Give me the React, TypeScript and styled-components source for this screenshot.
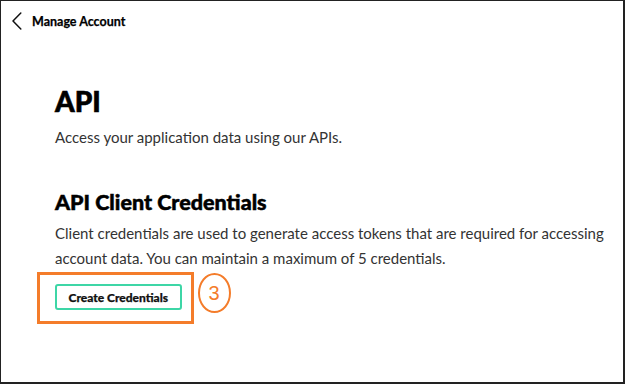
import React from 'react'
import styled, { createGlobalStyle } from 'styled-components'

const Global = createGlobalStyle`
  html, body {
    margin: 0;
    padding: 0;
    background: #ffffff;
  }
  * {
    box-sizing: border-box;
  }
`

const App = () => {
  return (
    <>
      <Global />
      <Frame>
        <Header>
          <BackButton aria-label="Back">
            <svg width="10" height="18" viewBox="0 0 10 18" fill="none">
              <path d="M8.8 1 L1 9 L8.8 17" stroke="#111" strokeWidth="1.5" strokeLinecap="round" strokeLinejoin="round" />
            </svg>
          </BackButton>
          <HeaderTitle>Manage Account</HeaderTitle>
        </Header>
        <Content>
          <PageTitle>API</PageTitle>
          <Text $gap={7}>Access your application data using our APIs.</Text>
          <SectionTitle>API Client Credentials</SectionTitle>
          <Text $gap={5}>
            Client credentials are used to generate access tokens that are required for accessing
            account data. You can maintain a maximum of 5 credentials.
          </Text>
          <ActionRow>
            <Highlight>
              <Button>Create Credentials</Button>
            </Highlight>
            <StepMarker>3</StepMarker>
          </ActionRow>
        </Content>
      </Frame>
    </>
  )
}

const Frame = styled.div`
  width: 625px;
  height: 384px;
  border-top: 1px solid #222;
  border-left: 1px solid #222;
  border-right: 2px solid #222;
  border-bottom: 2px solid #222;
  font-family: Lato, "Noto Sans", sans-serif;
  color: #111;
  overflow: hidden;
`

const Header = styled.div`
  display: flex;
  align-items: center;
  height: 40px;
  padding-left: 11px;
  gap: 10px;
`

const BackButton = styled.div`
  display: flex;
  align-items: center;
  width: 10px;
  height: 18px;
`

const HeaderTitle = styled.div`
  font-size: 12.5px;
  font-weight: 700;
  color: #000;
  -webkit-text-stroke: 0.25px #000;
`

const Content = styled.div`
  padding: 43px 0 0 54px;
`

const PageTitle = styled.h1`
  margin: 0;
  font-size: 28px;
  font-weight: 900;
  line-height: 34px;
  color: #000;
  -webkit-text-stroke: 0.6px #000;
`

const SectionTitle = styled.h2`
  margin: 38px 0 0;
  font-size: 21.5px;
  font-weight: 900;
  line-height: 28px;
  color: #000;
  -webkit-text-stroke: 0.5px #000;
`

const Text = styled.p<{ $gap: number }>`
  margin: ${(p) => p.$gap}px 0 0;
  font-size: 15px;
  line-height: 25px;
  color: #333;
`

const ActionRow = styled.div`
  display: flex;
  align-items: flex-start;
  margin: 1px 0 0 -18px;
  gap: 4px;
`

const Highlight = styled.div`
  display: flex;
  border: 3px solid #f47c2a;
  padding: 9px 9px 11px 15px;
`

const Button = styled.button`
  height: 26px;
  padding: 0 11.5px;
  border: 2px solid #3dd6a6;
  border-radius: 3px;
  background: #fff;
  font-family: Lato, "Noto Sans", sans-serif;
  font-size: 12px;
  font-weight: 900;
  color: #111;
  -webkit-text-stroke: 0.25px #111;
  cursor: pointer;
`

const StepMarker = styled.div`
  display: flex;
  align-items: center;
  justify-content: center;
  width: 33px;
  height: 40px;
  margin-top: 1px;
  border: 2px solid #f47c2a;
  border-radius: 50%;
  font-family: "Liberation Sans", Arial, sans-serif;
  font-size: 20px;
  color: #f47c2a;
`

export default App
